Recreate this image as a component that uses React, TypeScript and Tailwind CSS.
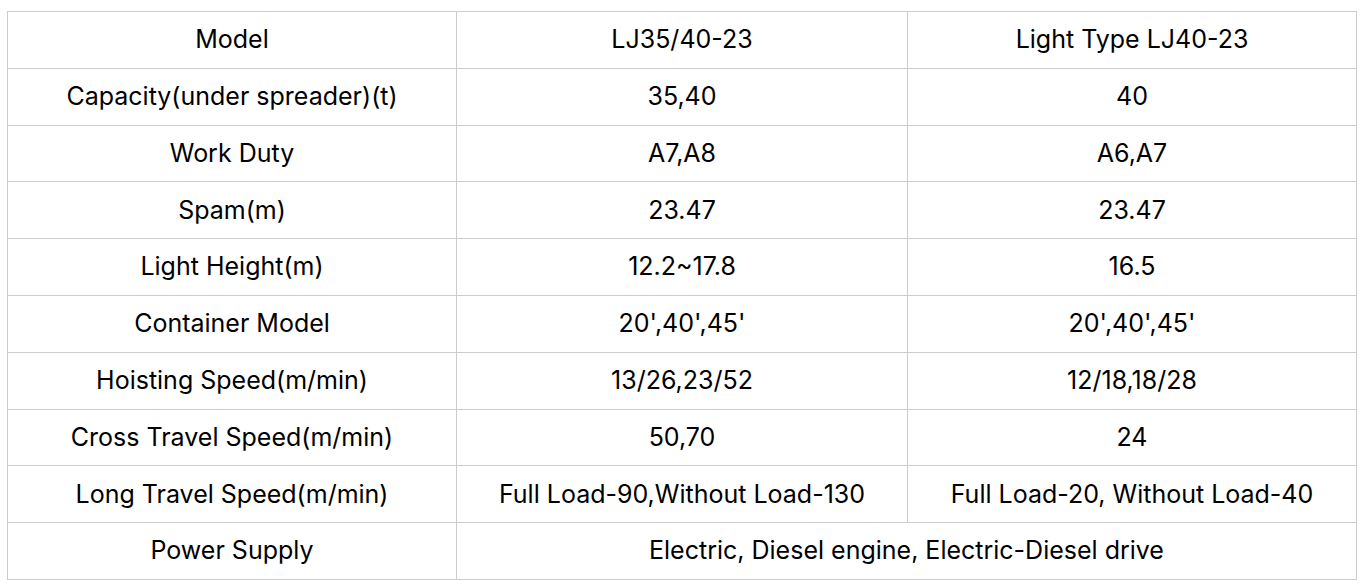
import React from 'react';

const rows: [string, string, string?][] = [
  ['Model', 'LJ35/40-23', 'Light Type LJ40-23'],
  ['Capacity(under spreader)(t)', '35,40', '40'],
  ['Work Duty', 'A7,A8', 'A6,A7'],
  ['Spam(m)', '23.47', '23.47'],
  ['Light Height(m)', '12.2~17.8', '16.5'],
  ['Container Model', "20',40',45'", "20',40',45'"],
  ['Hoisting Speed(m/min)', '13/26,23/52', '12/18,18/28'],
  ['Cross Travel Speed(m/min)', '50,70', '24'],
  ['Long Travel Speed(m/min)', 'Full Load-90,Without Load-130', 'Full Load-20, Without Load-40'],
  ['Power Supply', 'Electric, Diesel engine, Electric-Diesel drive'],
];

const App: React.FC = () => {
  return (
    <div className="w-[1369px] h-[587px] bg-white pt-[11px] pl-[7px] font-['Inter',sans-serif] text-black">
      <table className="w-[1350px] border-collapse table-fixed text-[25px]">
        <tbody>
          {rows.map(([label, a, b]) => (
            <tr key={label} className="h-[56.8px]">
              <td className="border border-[#cccccc] text-center w-[449px]">{label}</td>
              {b === undefined ? (
                <td colSpan={2} className="border border-[#cccccc] text-center">{a}</td>
              ) : (
                <>
                  <td className="border border-[#cccccc] text-center w-[451px]">{a}</td>
                  <td className="border border-[#cccccc] text-center">{b}</td>
                </>
              )}
            </tr>
          ))}
        </tbody>
      </table>
    </div>
  );
};

export default App;
